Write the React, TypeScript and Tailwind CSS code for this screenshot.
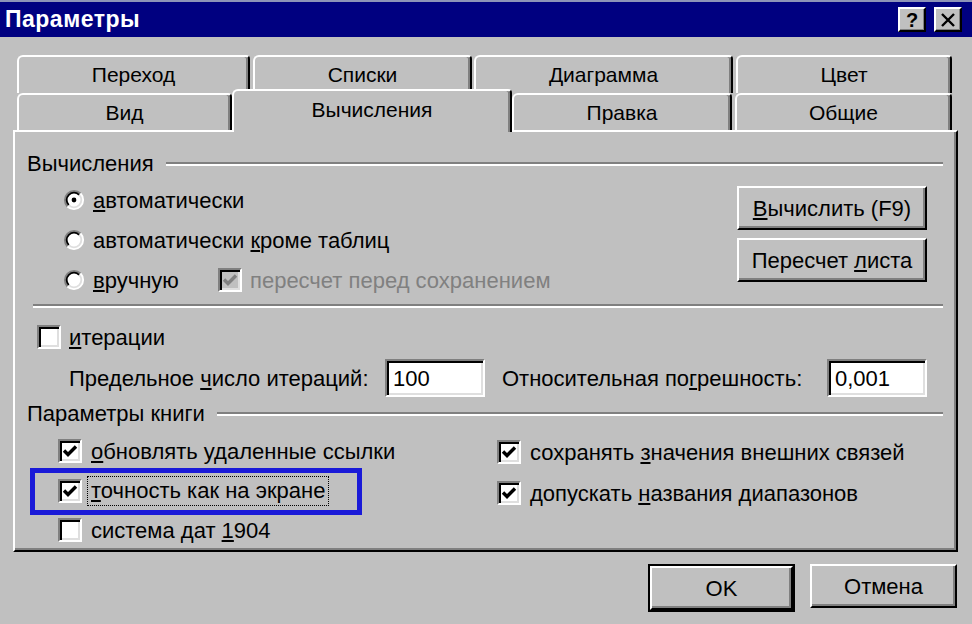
import React from "react";

function Check({ checked, disabled }: { checked?: boolean; disabled?: boolean }) {
  return (
    <div
      className={`w-[24px] h-[24px] shrink-0 border-2 border-t-[#808080] border-l-[#808080] border-r-white border-b-white ${
        disabled ? "bg-[#c0c0c0]" : "bg-white"
      } shadow-[inset_2px_2px_0_#000,inset_-2px_-2px_0_#dfdfdf] flex items-center justify-center`}
    >
      {checked && (
        <svg width="16" height="14" viewBox="0 0 16 14">
          <path d="M2 6.5 L6 10.5 L14 2.5" stroke={disabled ? "#808080" : "#000"} strokeWidth="3.4" fill="none" />
        </svg>
      )}
    </div>
  );
}

function Radio({ checked }: { checked?: boolean }) {
  return (
    <svg width="22" height="22" viewBox="0 0 24 24" className="shrink-0">
      <circle cx="12" cy="12" r="10" fill="#fff" />
      <path d="M 4.93 19.07 A 10 10 0 0 1 19.07 4.93" stroke="#808080" strokeWidth="2.2" fill="none" />
      <path d="M 19.07 4.93 A 10 10 0 0 1 4.93 19.07" stroke="#ffffff" strokeWidth="2.2" fill="none" />
      <path d="M 6.34 17.66 A 8 8 0 0 1 17.66 6.34" stroke="#000" strokeWidth="2" fill="none" />
      <path d="M 17.66 6.34 A 8 8 0 0 1 6.34 17.66" stroke="#dfdfdf" strokeWidth="2" fill="none" />
      {checked && <circle cx="12" cy="12" r="2.6" fill="#000" />}
    </svg>
  );
}

function Btn({ children, w }: { children: React.ReactNode; w: string }) {
  return (
    <div
      className={`${w} h-[44px] bg-[#c0c0c0] border-2 border-t-white border-l-white border-r-black border-b-black shadow-[inset_-2px_-2px_0_#808080] flex items-center justify-center text-[22px] text-black`}
    >
      {children}
    </div>
  );
}

function Heading({ text }: { text: string }) {
  return (
    <div className="flex items-center h-[24px]">
      <span className="text-[22px] leading-none">{text}</span>
      <div className="flex-1 ml-[12px] border-t-2 border-[#808080] border-b-2 border-b-white" />
    </div>
  );
}

const tab =
  "bg-[#c0c0c0] border-t-2 border-l-2 border-white border-r-2 border-r-black rounded-tl-[6px] rounded-tr-[4px] shadow-[inset_-2px_0_0_#808080] flex items-center justify-center text-[21px] text-black";

function TitleBtn({ children }: { children: React.ReactNode }) {
  return (
    <div className="w-[28px] h-[25px] bg-[#c0c0c0] border-2 border-t-white border-l-white border-r-black border-b-black shadow-[inset_-1px_-1px_0_#808080] flex items-center justify-center">
      {children}
    </div>
  );
}

export default function App() {
  return (
    <div className="w-[972px] h-[624px] bg-[#c0c0c0] overflow-hidden flex flex-col font-['Liberation_Sans',Arial,sans-serif] text-black">
      {/* Title bar */}
      <div className="h-[37px] bg-[#000080] border-t-2 border-[#8d93b8] flex items-center justify-between pl-[5px] pr-[10px]">
        <span className="text-white font-bold text-[23px] tracking-[0.5px]">Параметры</span>
        <div className="flex gap-[8px]">
          <TitleBtn>
            <span className="text-[20px] font-bold leading-none">?</span>
          </TitleBtn>
          <TitleBtn>
            <svg width="16" height="14" viewBox="0 0 16 14">
              <path d="M2 1 L14 13 M14 1 L2 13" stroke="#000" strokeWidth="2.4" />
            </svg>
          </TitleBtn>
        </div>
      </div>

      {/* Tabs */}
      <div className="pt-[18px] pl-[17px] flex flex-col">
        <div className="flex h-[38px]">
          <div className={`${tab} w-[233px]`}>Переход</div>
          <div className={`${tab} w-[219px] ml-[3px]`}>Списки</div>
          <div className={`${tab} w-[259px] ml-[2px]`}>Диаграмма</div>
          <div className={`${tab} w-[216px] ml-[3px]`}>Цвет</div>
        </div>
        <div className="flex h-[37px]">
          <div className={`${tab} w-[215px]`}>Вид</div>
          <div className={`${tab} w-[280px] h-[43px] -mt-[4px] relative z-10 pb-[4px]`}>Вычисления</div>
          <div className={`${tab} w-[220px]`}>Правка</div>
          <div className={`${tab} w-[217px] ml-[3px]`}>Общие</div>
        </div>
      </div>

      {/* Panel */}
      <div className="ml-[13px] w-[945px] h-[422px] border-2 border-t-white border-l-white border-r-black border-b-black shadow-[inset_-2px_-2px_0_#808080] pl-[12px] pr-[13px] flex flex-col">
        <div className="mt-[20px]">
          <Heading text="Вычисления" />
        </div>

        <div className="flex h-[120px] mt-[4px]">
          <div className="flex flex-col ml-[36px] text-[22px]">
            <div className="h-[40px] flex items-center">
              <Radio checked />
              <span className="ml-[8px]">
                <u>а</u>втоматически
              </span>
            </div>
            <div className="h-[40px] flex items-center">
              <Radio />
              <span className="ml-[8px]">
                автоматически <u>к</u>роме таблиц
              </span>
            </div>
            <div className="h-[40px] flex items-center">
              <Radio />
              <span className="ml-[8px] w-[125px]">
                <u>в</u>ручную
              </span>
              <Check checked disabled />
              <span className="ml-[8px] text-[#808080]">пересчет перед сохранением</span>
            </div>
          </div>
          <div className="ml-auto mr-[16px] flex flex-col gap-[8px] pt-[6px]">
            <Btn w="w-[190px]">
              <span>
                <u>В</u>ычислить (F9)
              </span>
            </Btn>
            <Btn w="w-[190px]">
              <span>
                Пересчет <u>л</u>иста
              </span>
            </Btn>
          </div>
        </div>

        <div className="mt-[4px] ml-[6px] border-t-2 border-[#808080] border-b-2 border-b-white" />

        <div className="mt-[12px] h-[34px] flex items-center ml-[10px] text-[22px]">
          <Check />
          <span className="ml-[8px]">
            <u>и</u>терации
          </span>
        </div>

        <div className="mt-[5px] h-[38px] flex items-center ml-[42px] text-[22px]">
          <span className="w-[316px]">
            Предельное <u>ч</u>исло итераций:
          </span>
          <div className="w-[100px] h-[38px] bg-white border-2 border-t-[#808080] border-l-[#808080] border-r-white border-b-white shadow-[inset_2px_2px_0_#000,inset_-2px_-2px_0_#dfdfdf] flex items-center pl-[6px]">
            100
          </div>
          <span className="w-[325px] ml-[17px]">
            Относительная по<u>г</u>решность:
          </span>
          <div className="w-[100px] h-[38px] bg-white border-2 border-t-[#808080] border-l-[#808080] border-r-white border-b-white shadow-[inset_2px_2px_0_#000,inset_-2px_-2px_0_#dfdfdf] flex items-center pl-[6px]">
            0,001
          </div>
        </div>

        <div className="mt-[5px]">
          <Heading text="Параметры книги" />
        </div>

        <div className="mt-[5px] flex text-[22px]">
          <div className="w-[470px] flex flex-col">
            <div className="h-[40px] flex items-center pl-[31px]">
              <Check checked />
              <span className="ml-[9px]">
                <u>о</u>бновлять удаленные ссылки
              </span>
            </div>
            <div className="h-[40px] flex items-center pl-[31px] relative">
              <div className="absolute left-[3px] -top-[3px] w-[332px] h-[47px] border-[5px] border-[#1a1ad8]" />
              <Check checked />
              <span className="ml-[5px] px-[3px] border border-dotted border-black leading-[28px]">
                <u>т</u>очность как на экране
              </span>
            </div>
            <div className="h-[38px] flex items-center pl-[31px]">
              <Check />
              <span className="ml-[9px]">
                система дат <u>1</u>904
              </span>
            </div>
          </div>
          <div className="flex flex-col">
            <div className="h-[42px] flex items-center">
              <Check checked />
              <span className="ml-[9px]">
                сохранять <u>з</u>начения внешних связей
              </span>
            </div>
            <div className="h-[40px] flex items-center">
              <Check checked />
              <span className="ml-[9px]">
                допускать <u>н</u>азвания диапазонов
              </span>
            </div>
          </div>
        </div>
      </div>

      {/* Bottom buttons */}
      <div className="mt-[12px] flex justify-end gap-[15px] pr-[15px]">
        <div className="border-2 border-black">
          <Btn w="w-[143px]">OK</Btn>
        </div>
        <Btn w="w-[147px]">Отмена</Btn>
      </div>
    </div>
  );
}
